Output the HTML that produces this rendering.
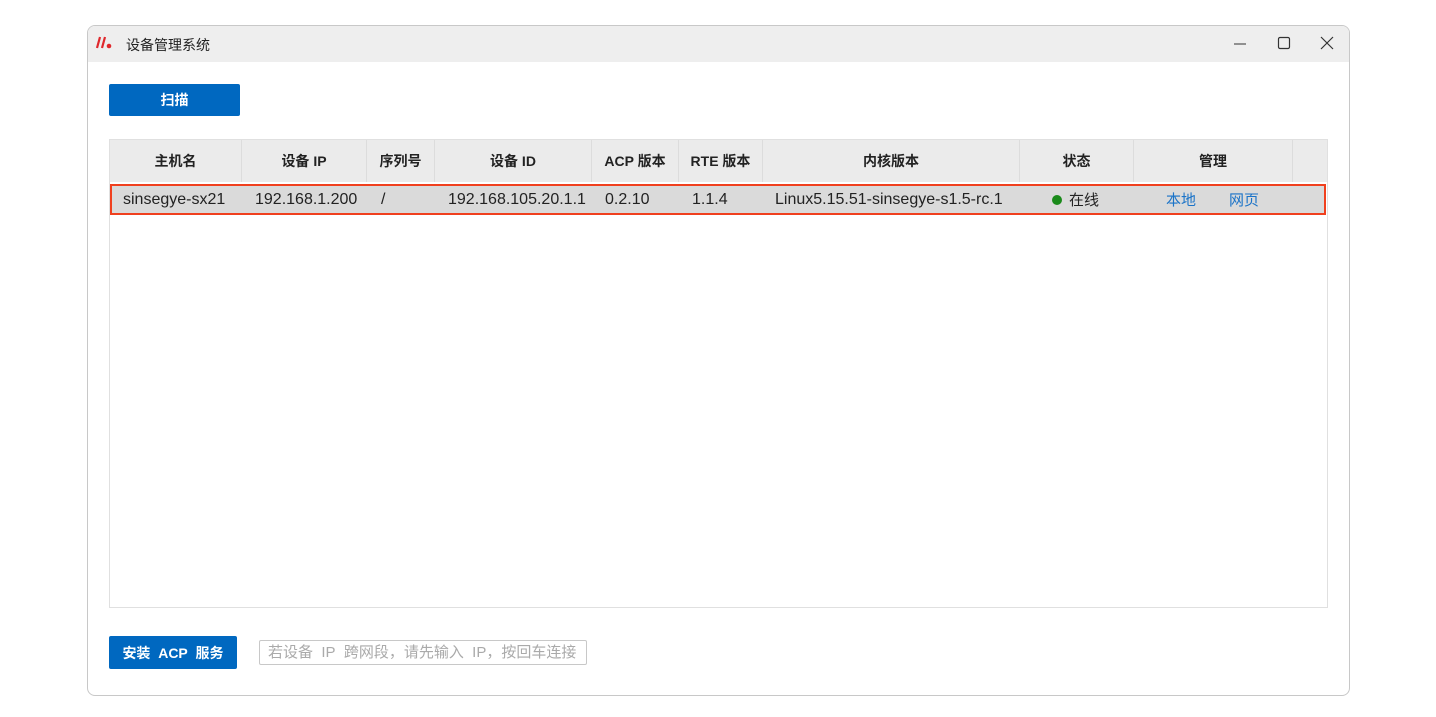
<!DOCTYPE html>
<html><head><meta charset="utf-8"><style>
*{margin:0;padding:0;box-sizing:border-box}
body{width:1436px;height:717px;background:#fff;position:relative;font-family:"Liberation Sans","Noto Sans CJK SC",sans-serif;overflow:hidden}
.win{position:absolute;left:87px;top:25px;width:1263px;height:671px;border:1px solid #c8c8c8;border-radius:8px;background:#fff;overflow:hidden}
.title{position:absolute;left:0;top:0;width:100%;height:36px;background:#eeeeee}
.title .t{position:absolute;left:38px;top:9px;font-size:14px;color:#222}
.btn{position:absolute;background:#0068c0;color:#fff;font-weight:bold;font-size:14px;border-radius:2px;display:flex;align-items:center;justify-content:center}
.tbl{position:absolute;left:21px;top:113px;width:1219px;height:469px;border:1px solid #e0e0e0}
.hdr{position:absolute;left:0;top:0;height:42px;width:100%;background:#ebebeb}
.c{position:absolute;top:0;height:42px;display:flex;align-items:center;justify-content:center;font-size:14px;font-weight:bold;color:#222;border-right:1px solid #dcdcdc}
.row{position:absolute;left:0;top:44px;width:1216px;height:31px;background:#dadada;border:2px solid #f0401e}
.r{position:absolute;top:0;height:27px;display:flex;align-items:center;font-size:16px;color:#222}
.lk{color:#1a73c8;font-size:15px}
</style></head><body>
<div class="win">
<div class="title">
<svg style="position:absolute;left:8px;top:10px" width="18" height="14" viewBox="0 0 18 14"><path d="M4 1L1 12M9 1L6 12" stroke="#e0282c" stroke-width="2.2"/><circle cx="13" cy="10" r="2.3" fill="#e0282c"/></svg>
<div class="t">设备管理系统</div>
<svg style="position:absolute;left:1145px;top:11px" width="14" height="14"><path d="M1 7H13" stroke="#333" stroke-width="1"/></svg>
<svg style="position:absolute;left:1189px;top:10px" width="14" height="14"><rect x="1.5" y="1.5" width="11" height="11" rx="1.5" fill="none" stroke="#333" stroke-width="1.2"/></svg>
<svg style="position:absolute;left:1232px;top:10px" width="14" height="14"><path d="M1 1L13 13M13 1L1 13" stroke="#333" stroke-width="1.2"/></svg>
</div>
<div class="btn" style="left:21px;top:58px;width:131px;height:32px">扫描</div>
<div class="tbl">
<div class="hdr">
<div class="c" style="left:0;width:132px">主机名</div>
<div class="c" style="left:132px;width:125px">设备 IP</div>
<div class="c" style="left:257px;width:68px">序列号</div>
<div class="c" style="left:325px;width:157px">设备 ID</div>
<div class="c" style="left:482px;width:87px">ACP 版本</div>
<div class="c" style="left:569px;width:84px">RTE 版本</div>
<div class="c" style="left:653px;width:257px">内核版本</div>
<div class="c" style="left:910px;width:114px">状态</div>
<div class="c" style="left:1024px;width:159px">管理</div>
</div>
<div class="row">
<div class="r" style="left:11px">sinsegye-sx21</div>
<div class="r" style="left:143px">192.168.1.200</div>
<div class="r" style="left:269px">/</div>
<div class="r" style="left:336px">192.168.105.20.1.1</div>
<div class="r" style="left:493px">0.2.10</div>
<div class="r" style="left:580px">1.1.4</div>
<div class="r" style="left:663px">Linux5.15.51-sinsegye-s1.5-rc.1</div>
<div class="r" style="left:940px;font-size:15px"><span style="display:inline-block;width:10px;height:10px;border-radius:50%;background:#1a8a1a;margin-right:7px"></span>在线</div>
<div class="r lk" style="left:1054px">本地</div>
<div class="r lk" style="left:1117px">网页</div>
</div>
</div>
<div class="btn" style="left:21px;top:610px;width:128px;height:33px">安装&nbsp; ACP&nbsp; 服务</div>
<div style="position:absolute;left:171px;top:614px;width:328px;height:25px;border:1px solid #c8c8c8;border-radius:2px;font-size:15px;color:#aaa;padding-left:8px;line-height:23px;white-space:nowrap">若设备&nbsp; IP&nbsp; 跨网段，请先输入&nbsp; IP，按回车连接</div>
</div>
</body></html>
